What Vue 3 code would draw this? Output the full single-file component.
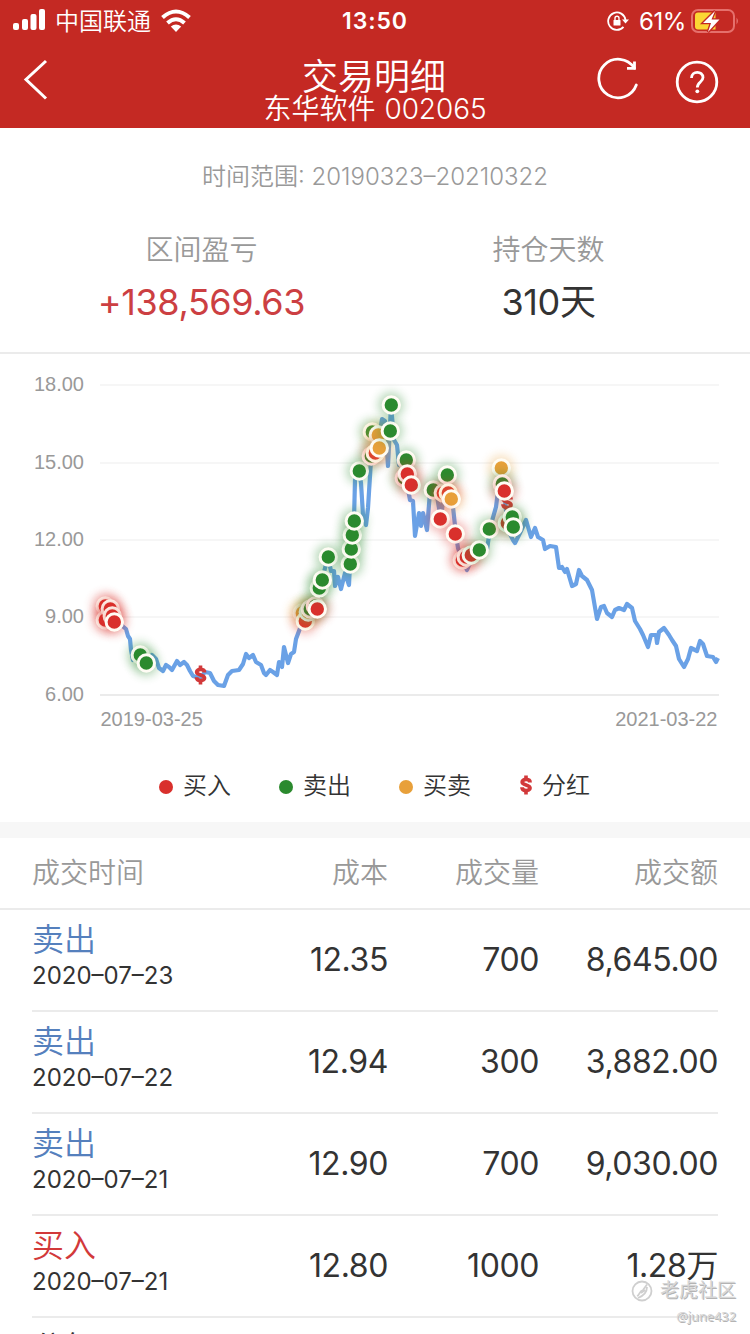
<script setup>
const red = '#d9302c'
const green = '#2b8a2e'
const orange = '#e8a03a'

const ticks = [
  { label: '18.00', y: 30 },
  { label: '15.00', y: 108 },
  { label: '12.00', y: 185 },
  { label: '9.00', y: 262 },
  { label: '6.00', y: 340 },
]

const price = [
  [105, 610], [110, 606], [114, 622], [120, 624], [126, 629], [128, 636], [130, 639], [131, 650], [133, 660], [140, 655], [146, 665],
  [152, 655], [156, 659], [159, 668], [163, 671], [166, 665], [169, 667], [172, 670], [177, 661], [180, 665], [184, 662], [187, 665],
  [190, 671], [193, 676], [200, 678], [205, 672], [210, 673], [214, 681], [218, 685], [224, 686], [228, 675], [232, 671], [239, 670],
  [243, 664], [246, 654], [249, 658], [253, 655], [256, 662], [261, 665], [264, 673], [266, 675], [270, 670], [273, 672], [277, 675],
  [279, 662], [282, 667], [284, 647], [288, 663], [291, 654], [294, 652], [296, 639], [299, 631], [303, 620], [311, 610], [317, 608],
  [320, 588], [324, 572], [328, 557], [331, 571], [334, 571], [335, 586], [338, 577], [341, 589], [345, 573], [349, 585], [350, 564],
  [352, 535], [354, 520], [355, 480], [359, 471], [361, 483], [363, 515], [366, 525], [368, 508], [371, 460], [375, 452], [379, 438],
  [382, 419], [385, 421], [388, 466], [391, 405], [394, 440], [397, 445], [399, 465], [403, 466], [406, 478], [410, 500], [413, 501],
  [415, 536], [419, 513], [421, 526], [423, 513], [427, 530], [430, 492], [436, 490], [441, 520], [445, 480], [450, 498], [453, 507],
  [456, 535], [458, 548], [463, 562], [467, 570], [474, 554], [481, 550], [487, 550], [490, 528], [496, 507], [498, 491], [501, 468],
  [504, 490], [508, 530], [513, 540], [515, 543], [520, 533], [526, 520], [531, 537], [535, 528], [538, 537], [543, 540], [545, 549],
  [550, 546], [556, 547], [559, 568], [562, 567], [565, 572], [567, 569], [572, 586], [576, 584], [579, 570], [582, 576], [587, 580],
  [592, 590], [597, 619], [601, 607], [604, 606], [607, 613], [612, 617], [615, 610], [619, 608], [624, 610], [627, 604], [632, 608],
  [635, 621], [640, 629], [643, 635], [648, 647], [651, 635], [656, 635], [657, 643], [659, 632], [664, 628], [669, 635], [672, 640],
  [676, 646], [679, 659], [684, 667], [688, 659], [691, 648], [697, 651], [700, 641], [703, 644], [707, 656], [713, 657], [716, 662], [718, 658],
]
const line = price.map(([x, y]) => `${x},${y - 354}`).join(' ')

const trades = [
  [105, 606, red], [105, 620, red], [110, 609, red], [112, 616, red], [114, 622, red],
  [140, 655, green], [146, 663, green],
  [302, 613, orange], [305, 621, red], [308, 612, orange], [310, 609, green], [315, 606, green], [317, 609, red],
  [319, 588, green], [322, 580, green], [328, 557, green], [350, 564, green], [351, 549, green], [352, 535, green], [354, 521, green], [359, 471, green],
  [372, 432, green], [378, 435, orange], [371, 456, green], [375, 453, red], [379, 448, orange], [390, 431, green], [391, 405, green],
  [406, 460, green], [404, 478, green], [407, 474, red], [411, 485, red],
  [433, 490, green], [443, 493, red], [447, 475, green], [448, 493, red], [451, 499, orange], [440, 519, red], [455, 534, red],
  [462, 560, red], [466, 557, red], [471, 555, red], [479, 550, green], [489, 529, green],
  [501, 468, orange], [502, 484, green], [504, 491, red], [507, 523, red], [512, 517, green], [513, 527, green],
]
const dividends = [[200.5, 675], [507, 502]]

const rows = [
  { side: '卖出', kind: 'sell', date: '2020–07–23', cost: '12.35', volume: '700', amount: '8,645.00' },
  { side: '卖出', kind: 'sell', date: '2020–07–22', cost: '12.94', volume: '300', amount: '3,882.00' },
  { side: '卖出', kind: 'sell', date: '2020–07–21', cost: '12.90', volume: '700', amount: '9,030.00' },
  { side: '买入', kind: 'buy', date: '2020–07–21', cost: '12.80', volume: '1000', amount: '1.28万' },
  { side: '分红', kind: 'bonus', date: '', cost: '', volume: '', amount: '' },
]
</script>

<template>
  <div class="screen">
    <header class="top">
      <div class="status">
        <div class="status-left">
          <svg class="signal" width="34" height="22" viewBox="0 0 34 22" fill="#fff">
            <rect x="1" y="14" width="6" height="7" rx="2" />
            <rect x="10" y="10" width="6" height="11" rx="2" />
            <rect x="18.500" y="5" width="6" height="16" rx="2" />
            <rect x="27" y="0" width="6" height="21" rx="2" />
          </svg>
          <span class="carrier">中国联通</span>
          <svg class="wifi" width="32" height="24" viewBox="0 0 32 24" fill="none" stroke="#fff" stroke-width="4">
            <path d="M2.500 8.500Q16 -3.500 29.500 8.500" />
            <path d="M7.500 14Q16 6.500 24.500 14" />
            <path d="M10.800 17.500Q16 13.400 21.200 17.500L16 23Z" fill="#fff" stroke="none" />
          </svg>
        </div>
        <div class="clock">13:50</div>
        <div class="status-right">
          <svg width="22" height="22" viewBox="0 0 22 22" fill="none" stroke="#fff" stroke-width="1.800">
            <path d="M18.500 10A8.700 8.700 0 1 0 16.500 16.800" />
            <path d="M15 9.500h7l-3.500 4z" fill="#fff" stroke="none" />
            <rect x="6.500" y="10" width="7" height="5.500" rx=".6" fill="#fff" stroke="none" />
            <path d="M8 10V8.300a2 2 0 0 1 4 0V10" stroke-width="1.400" />
          </svg>
          <span class="percent">61%</span>
          <svg class="battery" width="48" height="24" viewBox="0 0 48 24">
            <rect x="1" y="1" width="42" height="22" rx="6" fill="none" stroke="#e5706c" stroke-width="2" />
            <path d="M45.500 8.500q3 3.500 0 7z" fill="#e5706c" />
            <path d="M7 3.500h17.500v17H7q-3 0-3-3v-11q0-3 3-3z" fill="#fbd634" />
            <path d="M24 2L12 14h8l-3 9L28.500 10.500h-8z" fill="#fff" stroke="#c42923" stroke-width="2.600" paint-order="stroke" />
          </svg>
        </div>
      </div>
      <nav class="nav">
        <svg class="back" width="26" height="42" viewBox="0 0 26 42" fill="none" stroke="#fff" stroke-width="3">
          <path d="M23 2L3 20.500L23 39.500" />
        </svg>
        <div class="heading">
          <h1>交易明细</h1>
          <p>东华软件 <span class="code">002065</span></p>
        </div>
        <div class="actions">
          <svg width="44" height="46" viewBox="0 0 44 46" fill="none" stroke="#fff" stroke-width="2.800" stroke-linecap="round">
            <path d="M38.300 11A19.300 19.300 0 1 0 40.300 28" />
            <path d="M38.500 4.500V11.300H31" stroke-linecap="butt" />
          </svg>
          <svg width="44" height="44" viewBox="0 0 44 44" fill="none" stroke="#fff" stroke-width="2.800">
            <circle cx="22" cy="22" r="19.800" />
            <path d="M16.500 18C16.500 10.500 28 10.500 28 17.500C28 22 22.300 22 22.300 27.500" />
            <circle cx="22.300" cy="31.300" r="1.900" fill="#fff" stroke="none" />
          </svg>
        </div>
      </nav>
    </header>

    <section class="summary">
      <p class="range">时间范围: <span>20190323–20210322</span></p>
      <div class="stats">
        <div class="stat">
          <p class="stat-label">区间盈亏</p>
          <p class="stat-value gain">+138,569.63</p>
        </div>
        <div class="stat">
          <p class="stat-label">持仓天数</p>
          <p class="stat-value days">310天</p>
        </div>
      </div>
    </section>

    <section class="chart">
      <svg width="750" height="391" viewBox="0 0 750 391">
        <defs>
          <filter id="glow" x="-100%" y="-100%" width="300%" height="300%">
            <feGaussianBlur stdDeviation="5" />
          </filter>
          <g id="dollar" fill="none" stroke="#d2393a">
            <path d="M4 -2.500C4 -6.500 -3.800 -6.500 -3.800 -3C-3.800 .3 4 -.4 4 3C4 6.500 -4 6.500 -4 2.300" stroke-width="3.800" />
            <path d="M0 -9.500V-5M0 5V9.500" stroke-width="3.600" />
          </g>
        </defs>
        <g v-for="t in ticks" :key="t.label">
          <line x1="100" x2="719" :y1="t.y + 1" :y2="t.y + 1" :stroke="t.y === 340 ? '#ebebeb' : '#f6f6f6'" stroke-width="2" />
          <text x="84" :y="t.y + 6.500" text-anchor="end">{{ t.label }}</text>
        </g>
        <text x="100.500" y="372">2019-03-25</text>
        <text x="717.500" y="372" text-anchor="end">2021-03-22</text>
        <polyline :points="line" fill="none" stroke="#6aa1e6" stroke-width="4.200" stroke-linejoin="round" />
        <use v-for="(d, i) in dividends" :key="'d' + i" href="#dollar" :x="d[0]" :y="d[1] - 354" />
        <g v-for="(t, i) in trades" :key="i">
          <circle :cx="t[0]" :cy="t[1] - 354" r="13" :fill="t[2]" opacity=".32" filter="url(#glow)" />
          <circle :cx="t[0] + .3" :cy="t[1] - 354" r="8.200" :fill="t[2]" stroke="#fffcf4" stroke-width="3" />
        </g>
      </svg>
      <ul class="legend">
        <li><i class="dot buy-dot"></i>买入</li>
        <li><i class="dot sell-dot"></i>卖出</li>
        <li><i class="dot both-dot"></i>买卖</li>
        <li>
          <svg class="dot-svg" width="14" height="20" viewBox="-7 -10 14 20"><use href="#dollar" /></svg>分红
        </li>
      </ul>
    </section>

    <section class="table">
      <div class="grid table-head">
        <span>成交时间</span><span class="num">成本</span><span class="num">成交量</span><span class="num">成交额</span>
      </div>
      <div class="table-body">
        <div v-for="(r, i) in rows" :key="i" class="grid row">
          <div class="trade">
            <span class="side" :class="r.kind">{{ r.side }}</span>
            <span class="date">{{ r.date }}</span>
          </div>
          <span class="num">{{ r.cost }}</span>
          <span class="num">{{ r.volume }}</span>
          <span class="num">{{ r.amount }}</span>
        </div>
      </div>
    </section>

    <aside class="watermark">
      <div class="brand">
        <svg width="22" height="22" viewBox="0 0 22 22" fill="none" stroke="#cfcfcf" stroke-width="1.800">
          <circle cx="11" cy="11" r="9.500" />
          <path d="M6 16C9 15 8 11 12 10L16 4.500M16 7C16 13 12 16 7 18M10 13l4-3" />
        </svg>
        <span>老虎社区</span>
      </div>
      <div class="user">@june432</div>
    </aside>
  </div>
</template>

<style>
body {
  margin: 0;
}
</style>

<style scoped>
.screen {
  position: relative;
  width: 750px;
  height: 1334px;
  overflow: hidden;
  background: #fff;
  color: #333;
  font-family: Inter, "Noto Sans CJK SC", sans-serif;
  font-weight: 350;
}
h1, p, ul {
  margin: 0;
  padding: 0;
  font-weight: 350;
}
.top {
  height: 128px;
  background: #c42923;
  color: #fff;
}
.status {
  display: grid;
  grid-template-columns: 1fr 100px 1fr;
  align-items: center;
  height: 40px;
  padding: 0 12px;
}
.status-left {
  display: flex;
  align-items: center;
}
.signal {
  margin-top: -2px;
}
.carrier {
  margin: 1px 9px 0 9px;
  font-size: 24px;
  line-height: 40px;
}
.wifi {
  margin-top: -1px;
}
.clock {
  text-align: center;
  font-size: 23px;
  font-weight: 600;
  letter-spacing: 0.9px;
  line-height: 42px;
}
.status-right {
  display: flex;
  align-items: center;
  justify-content: flex-end;
}
.battery {
  margin: 0 -1px 0 0;
}
.percent {
  margin: 1px 5px 0 10px;
  font-size: 24px;
  font-weight: 400;
  letter-spacing: -0.4px;
}
.nav {
  display: grid;
  grid-template-columns: 200px 1fr 200px;
  height: 88px;
}
.back {
  margin: 19px 0 0 23px;
}
.heading {
  text-align: center;
}
h1 {
  margin: 19px 2px 0 0;
  font-size: 36px;
  line-height: 36px;
}
.heading p {
  font-size: 28px;
  line-height: 28px;
  white-space: nowrap;
  word-spacing: 1px;
}
.code {
  letter-spacing: -0.1px;
}
.actions {
  display: flex;
  gap: 35px;
  padding: 17px 0 0 46px;
}
.actions svg:last-child {
  margin-top: 3px;
}
.summary {
  box-sizing: border-box;
  height: 226px;
  padding-top: 28px;
  border-bottom: 2px solid #ebebeb;
}
.range {
  text-align: center;
  color: #999;
  font-size: 24px;
  line-height: 42px;
}
.stats {
  display: grid;
  grid-template-columns: 1fr 1fr;
  padding: 29px 28px 0;
  text-align: center;
}
.stat-label {
  color: #999;
  font-size: 28px;
  line-height: 46px;
}
.stat-value {
  font-size: 36px;
  font-weight: 400;
  letter-spacing: -0.4px;
  line-height: 58px;
}
.gain {
  color: #cc3f42;
}
.chart {
  height: 468px;
  border-bottom: 16px solid #f7f7f7;
}
.chart svg {
  display: block;
}
.chart text {
  fill: #999;
  font: 400 20px "Liberation Sans", sans-serif;
}
.legend {
  display: flex;
  padding-left: 159px;
  list-style: none;
  font-size: 24px;
  line-height: 82px;
}
.legend li {
  display: flex;
  align-items: center;
  width: 120px;
}
.dot {
  width: 14px;
  height: 14px;
  margin: 1px 10px 0 0;
  border-radius: 50%;
}
.dot-svg {
  margin: -2px 9px 0 0;
}
.buy-dot {
  background: #d9302c;
}
.sell-dot {
  background: #2b8a2e;
}
.both-dot {
  background: #e8a03a;
}
.grid {
  display: grid;
  grid-template-columns: 180px 176px 151px 179px;
  align-items: center;
}
.num {
  text-align: right;
}
.table-head {
  box-sizing: border-box;
  height: 72px;
  padding: 0 32px;
  border-bottom: 2px solid #ebebeb;
  color: #999;
  font-size: 28px;
  line-height: 50px;
}
.table-body {
  padding: 0 32px;
}
.row {
  box-sizing: border-box;
  height: 102px;
  border-bottom: 2px solid #ebebeb;
  font-size: 32px;
}
.row .num {
  font-weight: 400;
  letter-spacing: -0.4px;
  line-height: 48px;
}
.trade {
  display: flex;
  flex-direction: column;
  align-self: start;
  padding-top: 10px;
}
.side {
  line-height: 40px;
}
.sell {
  color: #5580bd;
}
.buy {
  color: #d2393a;
}
.date {
  font-size: 24px;
  font-weight: 400;
  line-height: 32px;
}
.watermark {
  position: absolute;
  right: 14px;
  bottom: 7px;
  color: #d6d6d6;
  text-align: right;
  text-shadow: 1px 1px 0 #b4b4b4;
}
.brand {
  display: flex;
  align-items: center;
  gap: 7px;
  font-size: 19px;
  font-weight: 400;
  line-height: 28px;
}
.user {
  font: 12.800px/22px "Noto Sans", sans-serif;
}
</style>
